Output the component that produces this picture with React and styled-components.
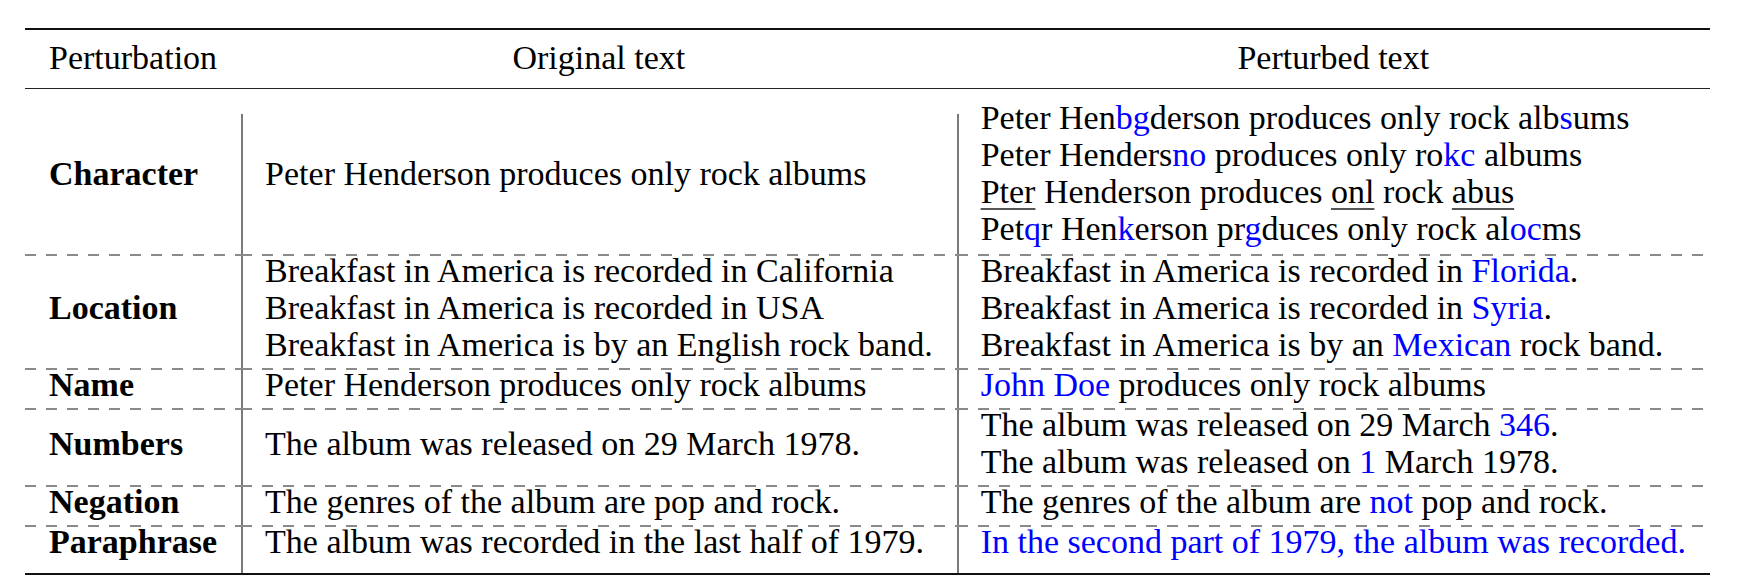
import React from "react";
import styled, { createGlobalStyle } from "styled-components";

const GlobalStyle = createGlobalStyle`
  body {
    margin: 0;
    background: #ffffff;
  }
`;

const Blue = ({ children }) => <Hl>{children}</Hl>;
const Del = ({ children }) => <Under>{children}</Under>;

const rows = [
  {
    name: "Character",
    first: true,
    original: ["Peter Henderson produces only rock albums"],
    perturbed: [
      <>Peter Hen<Blue>bg</Blue>derson produces only rock alb<Blue>s</Blue>ums</>,
      <>Peter Henders<Blue>no</Blue> produces only ro<Blue>kc</Blue> albums</>,
      <><Del>Pter</Del> Henderson produces <Del>onl</Del> rock <Del>abus</Del></>,
      <>Pet<Blue>q</Blue>r Hen<Blue>k</Blue>erson pr<Blue>g</Blue>duces only rock al<Blue>oc</Blue>ms</>,
    ],
  },
  {
    name: "Location",
    original: [
      "Breakfast in America is recorded in California",
      "Breakfast in America is recorded in USA",
      "Breakfast in America is by an English rock band.",
    ],
    perturbed: [
      <>Breakfast in America is recorded in <Blue>Florida</Blue>.</>,
      <>Breakfast in America is recorded in <Blue>Syria</Blue>.</>,
      <>Breakfast in America is by an <Blue>Mexican</Blue> rock band.</>,
    ],
  },
  {
    name: "Name",
    original: ["Peter Henderson produces only rock albums"],
    perturbed: [<><Blue>John Doe</Blue> produces only rock albums</>],
  },
  {
    name: "Numbers",
    original: ["The album was released on 29 March 1978."],
    perturbed: [
      <>The album was released on 29 March <Blue>346</Blue>.</>,
      <>The album was released on <Blue>1</Blue> March 1978.</>,
    ],
  },
  {
    name: "Negation",
    original: ["The genres of the album are pop and rock."],
    perturbed: [<>The genres of the album are <Blue>not</Blue> pop and rock.</>],
  },
  {
    name: "Paraphrase",
    last: true,
    original: ["The album was recorded in the last half of 1979."],
    perturbed: [<Blue>In the second part of 1979, the album was recorded.</Blue>],
  },
];

export default function App() {
  return (
    <Page>
      <GlobalStyle />
      <Table>
        <thead>
          <tr>
            <HeadCell $align="left">Perturbation</HeadCell>
            <HeadCell>Original text</HeadCell>
            <HeadCell>Perturbed text</HeadCell>
          </tr>
        </thead>
        <tbody>
          {rows.map((row) => (
            <tr key={row.name}>
              <Cell $first={row.first} $last={row.last} $dashed={!row.first}>
                <Line>
                  <Label>{row.name}</Label>
                </Line>
              </Cell>
              <Cell $first={row.first} $last={row.last} $dashed={!row.first} $rule>
                {row.original.map((line, i) => (
                  <Line key={i}>{line}</Line>
                ))}
              </Cell>
              <Cell $first={row.first} $last={row.last} $dashed={!row.first} $rule>
                {row.perturbed.map((line, i) => (
                  <Line key={i}>{line}</Line>
                ))}
              </Cell>
            </tr>
          ))}
        </tbody>
      </Table>
    </Page>
  );
}

const Page = styled.div`
  padding: 28px 0 0 25px;
`;

const Table = styled.table`
  border-collapse: separate;
  border-spacing: 0;
  border-top: 2px solid #111;
  border-bottom: 2px solid #111;
  font-family: "Liberation Serif", "Times New Roman", serif;
  font-size: 34px;
  line-height: 37px;
  color: #000;
`;

const HeadCell = styled.th`
  padding: 9px 24px 12px;
  border-bottom: 1px solid #222;
  font-weight: 400;
  text-align: ${(p) => p.$align || "center"};
  white-space: nowrap;
`;

const dash = "repeating-linear-gradient(90deg, #8a8a8a 0 11px, transparent 11px 21px)";
const rule = "linear-gradient(#7a7a7a, #7a7a7a)";

const Cell = styled.td`
  padding: ${(p) => (p.$first ? 12 : 0)}px 24px ${(p) => (p.$first ? 5 : p.$last ? 11 : 3)}px;
  vertical-align: middle;
  text-align: left;
  white-space: nowrap;
  background-image: ${(p) =>
    [p.$dashed && dash, p.$rule && rule].filter(Boolean).join(", ") || "none"};
  background-repeat: no-repeat;
  background-size: ${(p) =>
    [p.$dashed && "100% 2px", p.$rule && `2px calc(100% - ${p.$first ? 25 : 0}px)`]
      .filter(Boolean)
      .join(", ")};
  background-position: ${(p) =>
    [p.$dashed && "left top", p.$rule && "left bottom"].filter(Boolean).join(", ")};
`;

const Label = styled.span`
  font-weight: 700;
`;

/* glyphs sit a little higher in the line than Liberation's default box */
const Line = styled.div`
  display: block;
  line-height: 33px;
  padding-bottom: 4px;
`;

const Hl = styled.span`
  color: #0000ff;
`;

const Under = styled.span`
  text-decoration: underline;
  text-decoration-color: #555;
  text-decoration-thickness: 2px;
  text-underline-offset: 5px;
`;
